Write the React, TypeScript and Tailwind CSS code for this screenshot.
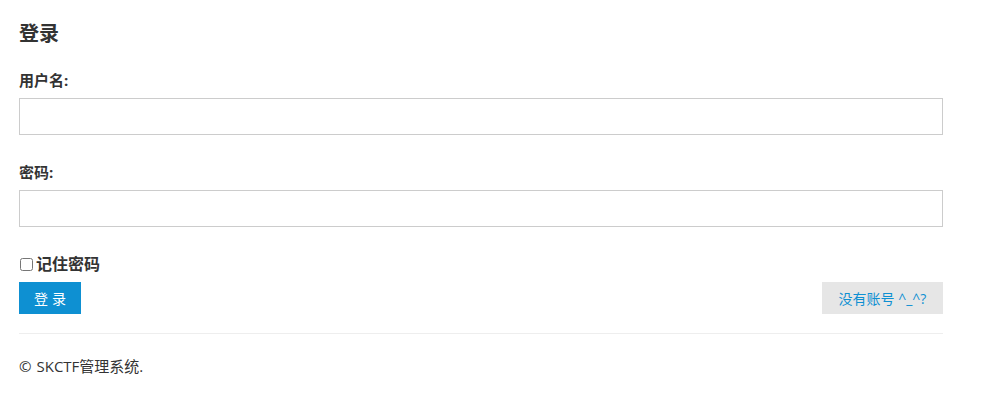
export default function App() {
  return (
    <div className="min-h-screen bg-white text-[#333] font-['Open_Sans','Noto_Sans_CJK_SC',sans-serif]">
      <div className="w-[924px] ml-[19px] pt-[21px]">
        <h2 className="text-[20px] font-bold leading-[26px]">登录</h2>

        <form className="mt-[22px] flex flex-col" onSubmit={(e) => e.preventDefault()}>
          <label className="text-[15px] font-bold leading-[22px]">用户名:</label>
          <input
            type="text"
            className="mt-[7px] h-[37px] w-full border border-[#ccc] px-2 text-[14px] outline-none"
          />

          <label className="mt-[26px] text-[15px] font-bold leading-[22px]">密码:</label>
          <input
            type="password"
            className="mt-[7px] h-[37px] w-full border border-[#ccc] px-2 text-[14px] outline-none"
          />

          <div className="mt-[26px] flex items-center gap-[3px] leading-[22px]">
            <input type="checkbox" className="ml-[1px] h-[13px] w-[13px]" />
            <span className="text-[16px] font-bold">记住密码</span>
          </div>

          <div className="mt-[7px] flex items-center justify-between">
            <button
              type="submit"
              className="h-[32px] w-[62px] bg-[#0e90d2] text-[14px] tracking-[4px] pl-[4px] text-white"
            >
              登录
            </button>
            <button
              type="button"
              className="h-[32px] w-[121px] bg-[#e6e6e6] text-[14px] text-[#0e90d2]"
            >
              没有账号 ^_^?
            </button>
          </div>
        </form>

        <hr className="mt-[19px] border-t border-[#eee]" />

        <p className="mt-[21px] text-[15px] leading-[22px]">
          ©<span className="ml-[5px]">SKCTF管理系统.</span>
        </p>
      </div>
    </div>
  );
}
